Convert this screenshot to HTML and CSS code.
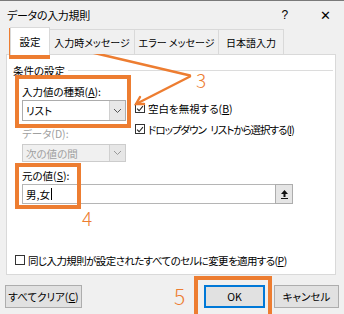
FILE: index.html
```html
<!DOCTYPE html>
<html lang="ja">
<head>
<meta charset="utf-8">
<link rel="stylesheet" href="styles.css">
</head>
<body>
<div class="dialog">
  <div class="titlebar">
    <span class="title">データの入力規則</span>
    <span class="tb-btns"><span class="help">?</span><span class="close">✕</span></span>
  </div>
  <div class="tabs">
    <div class="tab sel">設定</div>
    <div class="tab t2">入力時メッセージ</div>
    <div class="tab t3">エラー メッセージ</div>
    <div class="tab t4">日本語入力</div>
  </div>
  <div class="panel">
    <div class="group-head"><span>条件の設定</span><i class="rule"></i></div>
    <div class="cond">
      <div class="left">
        <div class="lbl l1">入力値の種類(<u>A</u>):</div>
        <div class="combo">
          <span class="val">リスト</span>
          <span class="arrow"><svg width="9" height="6" viewBox="0 0 9 6"><polyline points="1,1 4.5,4.5 8,1" fill="none" stroke="#555" stroke-width="1"/></svg></span>
        </div>
        <div class="lbl dis l2">データ(D):</div>
        <div class="combo disabled">
          <span class="val">次の値の間</span>
          <span class="arrow"><svg width="9" height="6" viewBox="0 0 9 6"><polyline points="1,1 4.5,4.5 8,1" fill="none" stroke="#999" stroke-width="1"/></svg></span>
        </div>
      </div>
      <div class="right">
        <div class="chk"><span class="box"><svg width="9" height="9" viewBox="0 0 9 9"><polyline points="1.2,4.6 3.5,7 7.8,1.8" fill="none" stroke="#222" stroke-width="1.2"/></svg></span><span>空白を無視する(<u>B</u>)</span></div>
        <div class="chk tight"><span class="box"><svg width="9" height="9" viewBox="0 0 9 9"><polyline points="1.2,4.6 3.5,7 7.8,1.8" fill="none" stroke="#222" stroke-width="1.2"/></svg></span><span>ドロップダウン リストから選択する(<u>I</u>)</span></div>
      </div>
    </div>
    <div class="source">
      <div class="lbl">元の値(<u>S</u>):</div>
      <div class="input">
        <span class="val">男,女<span class="caret"></span></span>
        <span class="range"><svg width="9" height="11" viewBox="0 0 9 11"><polygon points="4.5,1 8,5 1,5" fill="#111"/><rect x="3.5" y="5" width="2" height="3" fill="#111"/><rect x="1" y="9" width="7" height="1" fill="#111"/></svg></span>
      </div>
    </div>
    <div class="chk apply"><span class="box"></span><span>同じ入力規則が設定されたすべてのセルに変更を適用する(<u>P</u>)</span></div>
  </div>
  <div class="buttons">
    <button class="btn clear">すべてクリア(<u>C</u>)</button>
    <div class="btn-group">
      <button class="btn ok">OK</button>
      <button class="btn cancel">キャンセル</button>
    </div>
  </div>

  <div class="mark m-tab"></div>
  <div class="mark m-type"></div>
  <div class="mark m-src"></div>
  <div class="mark m-ok"></div>
  <span class="num n3">3</span>
  <span class="num n4">4</span>
  <span class="num n5">5</span>
  <svg class="arrows" width="344" height="314" viewBox="0 0 344 314">
    <g stroke="#ED7D31" stroke-width="2.4" fill="none" stroke-linecap="round">
      <line x1="190" y1="74.5" x2="56" y2="43"/>
      <polyline points="63,39 54,42.5 62,47.5"/>
      <line x1="190" y1="75.5" x2="138" y2="102"/>
      <polyline points="140,96 136,103 144,103"/>
    </g>
  </svg>
</div>
</body>
</html>
```
FILE: styles.css
```css
* { box-sizing: border-box; }
html, body { margin: 0; padding: 0; }
body {
  width: 344px;
  height: 314px;
  overflow: hidden;
  background: #f0f0f0;
  font-family: "Noto Sans CJK JP", "Noto Sans", sans-serif;
  font-size: 11px;
  color: #000;
  font-feature-settings: "palt" 1;
}
.dialog {
  position: relative;
  width: 344px;
  height: 314px;
  border-top: 1px solid #7a7a7a;
}
.titlebar {
  height: 26px;
  display: flex;
  align-items: center;
  justify-content: space-between;
  padding-left: 7px;
  padding-top: 2px;
}
.title { font-size: 11px; letter-spacing: -0.3px; }
.tb-btns { display: flex; align-items: center; }
.help { font-family: "Liberation Sans", sans-serif; font-size: 12px; margin-right: 32px; }
.close { font-family: "DejaVu Sans", sans-serif; font-size: 13px; margin-right: 13px; }

.tabs {
  height: 27px;
  display: flex;
  align-items: flex-end;
  padding-left: 10px;
  position: relative;
  z-index: 1;
}
.tab {
  height: 25px;
  display: flex;
  align-items: center;
  justify-content: center;
  border: 1px solid #d9d9d9;
  border-bottom: none;
  border-left: none;
  background: #f0f0f0;
  font-size: 10px;
}
.tab.sel {
  width: 40px;
  height: 28px;
  margin-bottom: -1px;
  background: #fff;
  border-left: 1px solid #d9d9d9;
  font-size: 10.5px;
}
.t2 { width: 85px; }
.t3 { width: 84px; }
.t4 { width: 65px; }

.panel {
  margin-left: 6px;
  width: 330px;
  height: 221px;
  background: #fff;
  border: 1px solid #d9d9d9;
  display: flex;
  flex-direction: column;
  padding-top: 9px;
}
.group-head {
  display: flex;
  align-items: center;
  height: 12px;
  padding-left: 6px;
  padding-right: 2px;
}
.group-head span { font-size: 10.5px; }
.group-head .rule {
  flex: 1;
  height: 1px;
  background: #dcdcdc;
  margin-left: 3px;
}
.cond {
  display: grid;
  grid-template-columns: 104px 1fr;
  column-gap: 9px;
  padding-left: 15px;
  margin-top: 9px;
}
.left { display: flex; flex-direction: column; }
.lbl { height: 14px; line-height: 14px; font-size: 10.5px; }
.lbl.dis { color: #a0a0a0; }
.l2 { margin-top: 6px; }
.combo {
  margin-top: 1px;
  height: 21px;
  border: 1px solid #acacac;
  background: #fff;
  display: flex;
  align-items: center;
}
.combo .val { flex: 1; padding-left: 3px; font-size: 10.5px; }
.combo .arrow {
  width: 16px;
  height: 100%;
  display: flex;
  align-items: center;
  justify-content: center;
  background: #e8e8e8;
  border-left: 1px solid #d0d0d0;
}
.combo.disabled {
  margin-top: 3px;
  height: 18px;
  background: #f0f0f0;
  border-color: #cccccc;
  color: #a0a0a0;
}
.combo.disabled .arrow { background: #e6e6e6; }

.right {
  display: flex;
  flex-direction: column;
  gap: 7px;
  padding-top: 16px;
}
.chk {
  display: flex;
  align-items: center;
  height: 14px;
  font-size: 10.5px;
  white-space: pre;
}
.chk.tight { letter-spacing: -1px; word-spacing: 3px; }
.chk .box {
  width: 10px;
  height: 10px;
  border: 1px solid #333;
  background: #fff;
  margin-right: 3px;
  display: flex;
  align-items: center;
  justify-content: center;
  flex: none;
}
.source {
  padding-left: 15px;
  margin-top: 7px;
  display: flex;
  flex-direction: column;
}
.input {
  margin-top: 1px;
  width: 271px;
  height: 20px;
  border: 1px solid #b5b5b5;
  display: flex;
  align-items: center;
}
.input .val { flex: 1; padding-left: 3px; font-size: 10.5px; display: flex; align-items: center; }
.caret { display: inline-block; width: 1px; height: 12px; background: #000; margin-left: 1px; }
.range {
  width: 18px;
  height: 20px;
  margin-right: -1px;
  border: 1px solid #adadad;
  background: #e5e5e5;
  display: flex;
  align-items: center;
  justify-content: center;
}
.apply {
  margin-top: auto;
  margin-bottom: 7px;
  padding-left: 8px;
  letter-spacing: -0.6px;
}
.buttons {
  margin-top: 10px;
  display: flex;
  justify-content: space-between;
  padding: 0 5px 0 5px;
}
.btn {
  height: 23px;
  border: 1px solid #adadad;
  background: #e1e1e1;
  font-family: inherit;
  font-size: 10.5px;
  font-feature-settings: "palt" 1;
  padding: 0;
  color: #000;
}
.clear { width: 77px; }
.btn-group { display: flex; gap: 9px; }
.ok { width: 61px; border: 1px solid #0078d7; box-shadow: inset 0 0 0 1px #0078d7; }
.cancel { width: 65px; }

.mark {
  position: absolute;
  border: 4px solid #ED7D31;
  pointer-events: none;
}
.m-tab { left: 9px; top: 27px; width: 41px; height: 31px; }
.m-type { left: 15px; top: 74px; width: 116px; height: 53px; }
.m-src { left: 15px; top: 162px; width: 66px; height: 46px; }
.m-ok { left: 194px; top: 275px; width: 78px; height: 42px; }
.num {
  position: absolute;
  color: #ED7D31;
  font-family: "Noto Sans CJK JP", sans-serif;
  font-weight: 300;
  line-height: 1;
}
.n3 { left: 196px; top: 69px; font-size: 19px; }
.n4 { left: 82px; top: 207px; font-size: 19px; }
.n5 { left: 174px; top: 285px; font-size: 21px; }
.arrows { position: absolute; left: 0; top: 0; pointer-events: none; }
```
